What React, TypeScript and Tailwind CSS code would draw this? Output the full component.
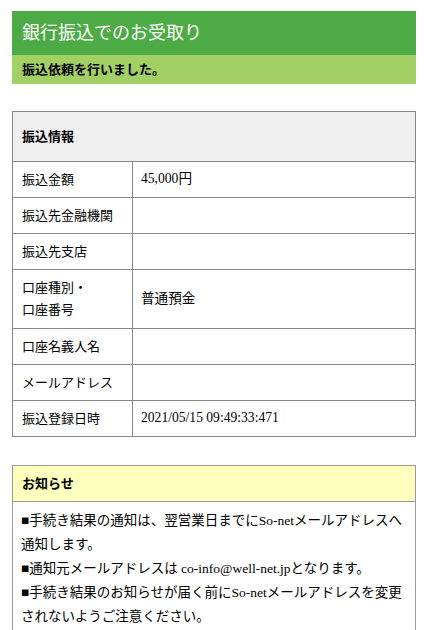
const rows: { label: string[]; value: string }[] = [
  { label: ['振込金額'], value: '45,000円' },
  { label: ['振込先金融機関'], value: '' },
  { label: ['振込先支店'], value: '' },
  { label: ['口座種別・', '口座番号'], value: '普通預金' },
  { label: ['口座名義人名'], value: '' },
  { label: ['メールアドレス'], value: '' },
  { label: ['振込登録日時'], value: '2021/05/15 09:49:33:471' },
];

const notices = [
  '■手続き結果の通知は、翌営業日までにSo-netメールアドレスへ通知します。',
  '■通知元メールアドレスは co-info@well-net.jpとなります。',
  '■手続き結果のお知らせが届く前にSo-netメールアドレスを変更されないようご注意ください。',
  '\u3000この間に変更されますと、手続き結果が届かなくなります。',
];

export default function App() {
  return (
    <div
      className="min-h-[630px] bg-white px-3 pt-[11px] pb-6 text-black"
      style={{ fontFamily: '"Liberation Serif", "Noto Sans CJK JP", serif' }}
    >
      <div className="bg-[#4cab44] px-[10px] h-[44px] flex items-center">
        <h1 className="text-[18px] text-white leading-none">銀行振込でのお受取り</h1>
      </div>
      <div className="bg-[#a2d064] px-[10px] h-[29px] flex items-center">
        <p className="text-[13px] font-bold leading-none">振込依頼を行いました。</p>
      </div>

      <table className="mt-[27px] w-full border-collapse border border-[#888] text-[13px]">
        <thead>
          <tr>
            <th
              colSpan={2}
              className="h-[50px] bg-[#efefef] border border-[#888] px-[9px] text-left font-bold"
            >
              振込情報
            </th>
          </tr>
        </thead>
        <tbody>
          {rows.map((r, i) => (
            <tr key={i}>
              <td
                className={`w-[120px] border border-[#888] px-[9px] leading-[22px] ${
                  r.label.length > 1 ? 'h-[59px]' : 'h-[36px]'
                }`}
              >
                {r.label.map((l, j) => (
                  <div key={j}>{l}</div>
                ))}
              </td>
              <td className="border border-[#888] px-[8px] text-[13.6px]">{r.value}</td>
            </tr>
          ))}
        </tbody>
      </table>

      <div className="mt-[28px] border border-[#999]">
        <div className="bg-[#ffffbe] border-b border-[#999] h-[36px] px-[9px] flex items-center">
          <h2 className="text-[13px] font-bold">お知らせ</h2>
        </div>
        <div className="px-[8px] py-[7px] text-[13.5px] leading-[24px]">
          {notices.map((n, i) => (
            <p key={i}>{n}</p>
          ))}
        </div>
      </div>
    </div>
  );
}
